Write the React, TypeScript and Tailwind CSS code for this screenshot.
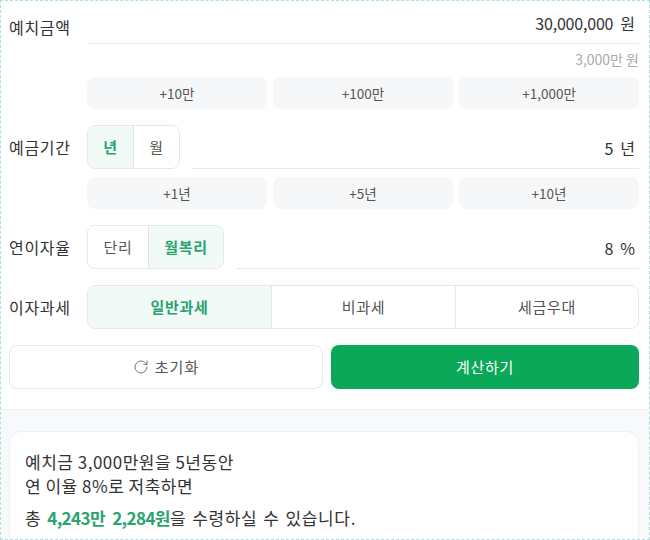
import { RotateCw } from 'lucide-react'

const font = { fontFamily: '"Noto Sans CJK KR", "Noto Sans", sans-serif' }

function QuickButtons({ items }: { items: string[] }) {
  return (
    <div className="ml-[78px] grid grid-cols-3 gap-1.5">
      {items.map((item) => (
        <button
          key={item}
          className="h-8 rounded-lg bg-[#f6f7f8] text-[13.5px] leading-8 text-[#555]"
        >
          {item}
        </button>
      ))}
    </div>
  )
}

function Segment({ label, active, className }: { label: string; active?: boolean; className: string }) {
  return (
    <button
      className={
        active
          ? `flex items-center justify-center bg-[#f1faf6] text-[15px] font-bold tracking-[0.7px] text-[#2ba36d] ${className}`
          : `flex items-center justify-center bg-white text-[15px] tracking-[0.7px] text-[#555] ${className}`
      }
    >
      {label}
    </button>
  )
}

function ValueInput({ value, unit, className }: { value: string; unit: string; className: string }) {
  return (
    <div
      className={`flex min-w-0 flex-1 items-center justify-end gap-[7px] border-b border-[#e5e7e9] pt-0.5 pr-1 text-base text-[#333] ${className}`}
    >
      <span className="tracking-[-0.2px]">{value}</span>
      <span>{unit}</span>
    </div>
  )
}

function Label({ text }: { text: string }) {
  return <label className="block w-[78px] shrink-0 text-base tracking-[0.7px] text-[#333]">{text}</label>
}

export default function App() {
  return (
    <div
      style={font}
      className="h-[540px] w-[650px] overflow-hidden border border-dashed border-[#a8dfe0] bg-white"
    >
      <section className="border-b border-[#eef0f1] pr-[10px] pb-5 pl-2">
        <div className="flex items-center">
          <div className="pt-2">
            <Label text="예치금액" />
          </div>
          <ValueInput value="30,000,000" unit="원" className="h-[43px]" />
        </div>
        <p className="mt-[5px] h-[28px] text-right text-[14px] leading-5 text-[#aaa]">3,000만 원</p>
        <QuickButtons items={['+10만', '+100만', '+1,000만']} />

        <div className="mt-4 flex items-center">
          <Label text="예금기간" />
          <div className="flex h-11 w-[93px] overflow-hidden rounded-lg border border-[#e5e7e9]">
            <Segment label="년" active className="w-[46px] border-r border-[#dfe6e3]" />
            <Segment label="월" className="flex-1" />
          </div>
          <div className="ml-3 flex min-w-0 flex-1">
            <ValueInput value="5" unit="년" className="h-11" />
          </div>
        </div>
        <div className="mt-2">
          <QuickButtons items={['+1년', '+5년', '+10년']} />
        </div>

        <div className="mt-4 flex items-center">
          <Label text="연이자율" />
          <div className="flex h-11 w-[137px] overflow-hidden rounded-lg border border-[#e5e7e9]">
            <Segment label="단리" className="w-[61px] border-r border-[#dfe6e3]" />
            <Segment label="월복리" active className="flex-1" />
          </div>
          <div className="ml-3 flex min-w-0 flex-1">
            <ValueInput value="8" unit="%" className="h-11" />
          </div>
        </div>

        <div className="mt-4 flex items-center">
          <Label text="이자과세" />
          <div className="grid h-11 flex-1 grid-cols-[184px_184px_1fr] overflow-hidden rounded-lg border border-[#e5e7e9]">
            <Segment label="일반과세" active className="border-r border-[#dfe6e3]" />
            <Segment label="비과세" className="border-r border-[#e5e7e9]" />
            <Segment label="세금우대" className="" />
          </div>
        </div>

        <div className="mt-4 flex gap-2">
          <button className="flex h-11 w-[314px] items-center justify-center gap-[6px] rounded-lg border border-[#e5e7e9] bg-white text-[15px] tracking-[1px] text-[#555]">
            <RotateCw size={16} strokeWidth={1.5} className="text-[#777]" />
            초기화
          </button>
          <button className="h-11 flex-1 rounded-lg bg-[#0aa858] text-[15px] tracking-[0.7px] text-white">
            계산하기
          </button>
        </div>
      </section>

      <section className="h-[140px] bg-[#f8f9fa] pt-[21px] pr-[10px] pl-2">
        <div className="h-[200px] rounded-xl border border-[#eef0f1] bg-white px-[15px] pt-[18px] text-[17px] leading-6 tracking-[0.5px] text-[#333]">
          <p>예치금 3,000만원을 5년동안</p>
          <p>연 이율 8%로 저축하면</p>
          <p className="mt-2 tracking-[0.65px] [word-spacing:1.5px]">
            총 <strong className="font-bold tracking-[-0.6px] text-[#2ba36d] [word-spacing:4px]">4,243만 2,284원</strong>을 수령하실 수 있습니다.
          </p>
        </div>
      </section>
    </div>
  )
}
